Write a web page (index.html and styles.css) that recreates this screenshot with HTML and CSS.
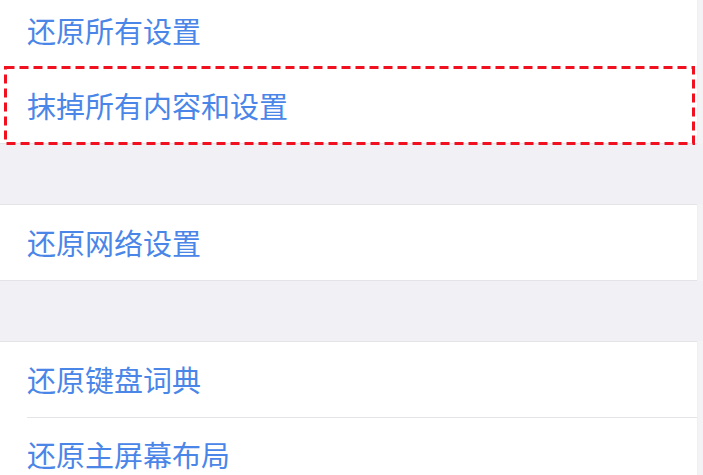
FILE: index.html
```html
<!DOCTYPE html>
<html lang="zh-CN">
<head>
<meta charset="utf-8">
<link rel="stylesheet" href="styles.css">
</head>
<body>
<div class="page">
  <div class="group first">
    <div class="row"><span class="label">还原所有设置</span></div>
    <div class="row highlighted">
      <span class="label">抹掉所有内容和设置</span>
      <svg class="mark" width="692" height="80" viewBox="0 0 692 80">
        <rect x="1.5" y="1.5" width="688" height="76" fill="none" stroke="#f01020" stroke-width="3" stroke-dasharray="9 5"/>
      </svg>
    </div>
  </div>
  <div class="gap"></div>
  <div class="group">
    <div class="row"><span class="label">还原网络设置</span></div>
  </div>
  <div class="gap"></div>
  <div class="group">
    <div class="row sep"><span class="label">还原键盘词典</span></div>
    <div class="row"><span class="label">还原主屏幕布局</span></div>
  </div>
</div>
</body>
</html>
```

FILE: styles.css
```css
html, body {
  margin: 0;
  padding: 0;
}
body {
  width: 703px;
  height: 475px;
  overflow: hidden;
  background: #f3f3f6;
  font-family: "Noto Sans CJK SC", "Noto Sans", sans-serif;
}
.page {
  width: 697px;
  border-right: 1px solid #f0f0f3;
}
.group {
  background: #ffffff;
  border-top: 1px solid #e4e4e8;
  border-bottom: 1px solid #e4e4e8;
}
.group.first {
  margin-top: -7px;
  border-top: none;
}
.gap {
  height: 60px;
  background: #f0f0f5;
  width: 703px;
}
.row {
  position: relative;
  height: 75px;
  display: flex;
  align-items: center;
  padding-left: 27px;
  box-sizing: border-box;
}
.row.sep::after {
  content: "";
  position: absolute;
  left: 27px;
  right: 0;
  bottom: -1px;
  height: 1px;
  background: #e4e4e8;
}
.label {
  font-size: 29px;
  line-height: 1;
  color: #4a86e8;
  letter-spacing: 0;
}
.mark {
  position: absolute;
  left: 4px;
  top: -2px;
}
```
